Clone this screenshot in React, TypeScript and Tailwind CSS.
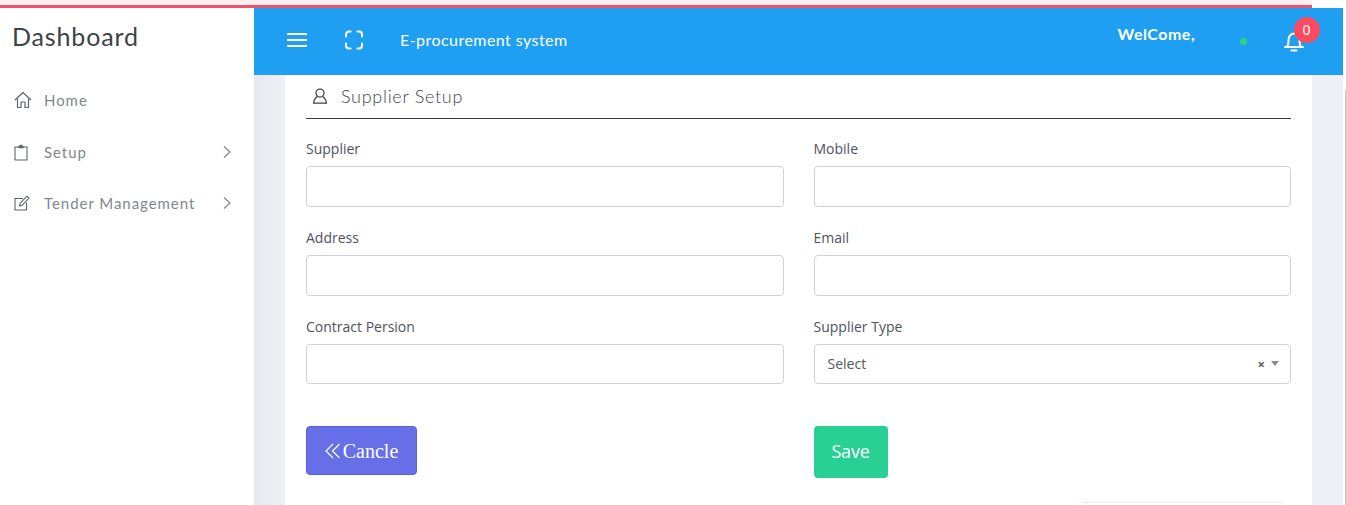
const quick = "font-['Lato',sans-serif]";
const open = "font-['Open_Sans',sans-serif]";

function HomeIcon() {
  return (
    <svg width="18" height="18" viewBox="0 0 18 18" fill="none" stroke="currentColor" strokeWidth="1.2" strokeLinejoin="round">
      <path d="M1 9 9 1.5 17 9" />
      <path d="M3.5 7.5V16.5H7V11H11V16.5H14.5V7.5" />
    </svg>
  );
}

function ClipIcon() {
  return (
    <svg width="14" height="17" viewBox="0 0 14 17" fill="none" stroke="currentColor" strokeWidth="1.1">
      <path d="M4 3H1V16H13V3H10" />
      <path d="M4.2 4V2.2H5.8V1H8.2V2.2H9.8V4Z" fill="currentColor" strokeWidth="0.5" />
    </svg>
  );
}

function EditIcon() {
  return (
    <svg width="16" height="16" viewBox="0 0 16 16" fill="none" stroke="currentColor" strokeWidth="1.1">
      <path d="M9 3.5H1V15H12.5V7.5" />
      <path d="M5.5 11 6.2 8.2 13 1.2 15 3.2 8.2 10.2Z" strokeLinejoin="round" />
    </svg>
  );
}

function UserIcon() {
  return (
    <svg width="16" height="17" viewBox="0 0 16 17" fill="none" stroke="currentColor" strokeWidth="1.25" strokeLinecap="round" className="mr-[13px]">
      <circle cx="8" cy="5" r="4" />
      <path d="M5.2 8.6C3.2 10 1.8 12.2 1.6 15.2H14.4C14.2 12.2 12.8 10 10.8 8.6" />
    </svg>
  );
}

function MenuIcon() {
  return (
    <svg width="20" height="14" viewBox="0 0 20 14" fill="none" stroke="currentColor" strokeWidth="2" className="ml-[33px]">
      <path d="M0 1H20M0 7H20M0 13H20" />
    </svg>
  );
}

function ExpandIcon() {
  return (
    <svg width="20" height="20" viewBox="0 0 20 20" fill="none" stroke="currentColor" strokeWidth="2" strokeLinecap="round" className="ml-[37px]">
      <path d="M2 6.5V4.5A3 3 0 0 1 5 1.5H6.5M13.5 1.5H15A3 3 0 0 1 18 4.5V6.5M18 13.5V15.5A3 3 0 0 1 15 18.5H13.5M6.5 18.5H5A3 3 0 0 1 2 15.5V13.5" />
    </svg>
  );
}

function BellIcon() {
  return (
    <svg width="22" height="20" viewBox="0 0 22 20" fill="none" stroke="currentColor" strokeWidth="2" strokeLinecap="round">
      <path d="M2 15H20M4 15C5.5 13 5.5 11 5.5 8A5.5 6.5 0 0 1 16.5 8C16.5 11 16.5 13 18 15" />
      <path d="M8.5 18.5H13.5" />
    </svg>
  );
}

function BackIcon() {
  return (
    <svg width="16" height="16" viewBox="0 0 16 16" fill="none" stroke="currentColor" strokeWidth="1.2" className="mr-[2px]">
      <path d="M8 1 1 8 8 15M14.5 1 7.5 8 14.5 15" />
    </svg>
  );
}

function ArrowIcon() {
  return (
    <svg width="10" height="14" viewBox="0 0 10 14" fill="none" stroke="currentColor" strokeWidth="1.2">
      <path d="M2 1.5 8 7 2 12.5" />
    </svg>
  );
}

function NavItem({ icon, label, arrow, className }: { icon: React.ReactNode; label: string; arrow?: boolean; className?: string }) {
  return (
    <div className={`flex h-[52px] items-center pl-[14px] pr-[22px] text-[15px] text-[#82878e] ${quick} ${className ?? ""}`}>
      <span className="flex w-[30px] text-[#5f656d]">{icon}</span>
      <span className="flex-1 tracking-[0.95px]">{label}</span>
      {arrow && <ArrowIcon />}
    </div>
  );
}

function Field({ label, inputClass }: { label: string; inputClass?: string }) {
  return (
    <div>
      <label className={`mb-[8px] block h-[19px] text-[14px] leading-[19px] text-[#4f5260] ${open}`}>{label}</label>
      <input className={`block w-full rounded-[4px] border border-[#cdd1d7] bg-white ${inputClass ?? "h-[41px]"}`} />
    </div>
  );
}

export default function App() {
  return (
    <div className="flex h-[505px] w-[1346px] flex-col overflow-hidden bg-white">
      <div className="h-[5px] w-[1312px] bg-[#fdeef1]" />
      <div className="h-[3px] w-[1312px] bg-[#f1536e]" />
      <div className="flex min-h-0 flex-1">
        <aside className="w-[254px] shrink-0 bg-white">
          <div className={`h-[67px] pl-[12px] pt-[11px] text-[25px] leading-[34px] tracking-[0.85px] text-[#3c4248] ${quick}`}>Dashboard</div>
          <nav className="-mt-[1px]">
            <NavItem icon={<HomeIcon />} label="Home" />
            <NavItem icon={<ClipIcon />} label="Setup" arrow />
            <NavItem icon={<EditIcon />} label="Tender Management" arrow className="-mt-[1px]" />
          </nav>
        </aside>
        <div className="flex w-[1089px] shrink-0 flex-col">
          <header className="flex h-[67px] shrink-0 items-center bg-[#1e9ff2] pb-[3px] text-white">
            <MenuIcon />
            <ExpandIcon />
            <span className={`ml-[36px] text-[16px] tracking-[0.45px] ${quick}`}>E-procurement system</span>
            <span className={`ml-[550px] -mt-[13px] w-[78px] whitespace-nowrap text-[16px] font-bold tracking-[0.5px] ${quick}`}>WelCome,</span>
            <span className="ml-[44px] mt-[2px] h-[7px] w-[7px] rounded-full bg-[#2ed47a]" />
            <div className="relative ml-[36px] mt-[3px] flex">
              <BellIcon />
              <span className="absolute -right-[15px] -top-[15px] flex h-[26px] w-[26px] items-center justify-center rounded-full bg-[#ff4961] text-[14px]">0</span>
            </div>
          </header>
          <main className="min-h-0 flex-1 overflow-hidden bg-[linear-gradient(90deg,#e6e8ee,#eff0f7_31px)] px-[31px]">
            <div className="h-full bg-white px-[21px]">
              <div className={`flex h-[44px] items-center border-b border-[#343a40] pl-[6px] text-[18px] font-light tracking-[0.7px] text-[#3e444b] ${quick}`}>
                <UserIcon />
                Supplier Setup
              </div>
              <div className="mt-[20px] grid grid-cols-2 gap-x-[30px] gap-y-[21px]">
                <Field label="Supplier" />
                <Field label="Mobile" />
                <Field label="Address" />
                <Field label="Email" />
                <Field label="Contract Persion" inputClass="h-[40px]" />
                <div>
                  <label className={`mb-[8px] block h-[19px] text-[14px] leading-[19px] text-[#4f5260] ${open}`}>Supplier Type</label>
                  <div className={`flex h-[40px] items-center rounded-[4px] border border-[#cdd1d7] pb-[2px] pl-[13px] pr-[11px] text-[14px] text-[#55595c] ${open}`}>
                    <span className="flex-1">Select</span>
                    <span className="mt-[2px] text-[13px] font-bold leading-none">×</span>
                    <span className="ml-[6px] h-0 w-0 border-x-[4px] border-t-[5px] border-x-transparent border-t-[#888]" />
                  </div>
                </div>
              </div>
              <div className="mt-[42px] grid grid-cols-2 gap-x-[30px]">
                <div>
                  <button className="flex h-[49px] w-[111px] items-center justify-center rounded-[4px] border border-[#5a61d6] bg-[#666ee8] pt-[1px] font-['Liberation_Serif',serif] text-[20px] text-white">
                    <BackIcon />
                    Cancle
                  </button>
                </div>
                <div>
                  <button className={`h-[52px] w-[74px] rounded-[4px] bg-[#28d094] pb-[2px] text-[18px] font-medium tracking-[-0.2px] text-white ${open}`}>Save</button>
                </div>
              </div>
              <div className="ml-auto mr-[7px] mt-[24px] h-[20px] w-[204px] rounded-[4px] border-t border-[#eceef1] shadow-[0_-2px_6px_rgba(0,0,0,0.03)]" />
            </div>
          </main>
        </div>
        <div className="flex w-[3px] flex-col items-end pt-[82px]">
          <div className="w-[1px] flex-1 bg-[#c8c8cc]" />
        </div>
      </div>
    </div>
  );
}
